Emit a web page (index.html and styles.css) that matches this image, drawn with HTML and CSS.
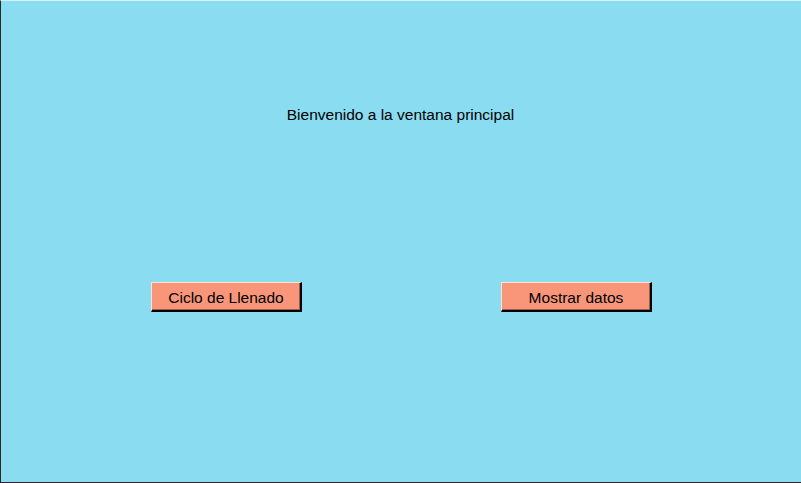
FILE: index.html
```html
<!DOCTYPE html>
<html lang="es">
<head>
<meta charset="utf-8">
<title>Ventana principal</title>
<link rel="stylesheet" href="styles.css">
</head>
<body>
<div class="window">
  <p class="welcome">Bienvenido a la ventana principal</p>
  <div class="actions">
    <button class="btn">Ciclo de Llenado</button>
    <button class="btn">Mostrar datos</button>
  </div>
</div>
</body>
</html>
```
FILE: styles.css
```css
html, body {
  margin: 0;
  padding: 0;
  background: #8adcf0;
}
.window {
  box-sizing: border-box;
  width: 801px;
  height: 483px;
  background: #8adcf0;
  border-left: 1px solid #2a2a2a;
  border-bottom: 1px solid #2a2a2a;
  border-top: 1px solid #d8f2f9;
  display: flex;
  flex-direction: column;
  font-family: "Liberation Sans", Arial, sans-serif;
  color: #000;
}
.welcome {
  margin: 105px 0 0 0;
  font-size: 15.5px;
  line-height: 18px;
  text-align: center;
  padding-right: 1px;
}
.actions {
  display: flex;
  margin-top: 158px;
  margin-left: 150px;
  gap: 199px;
}
.btn {
  box-sizing: border-box;
  width: 151px;
  height: 30px;
  padding: 2px 0 0 0;
  margin: 0;
  background: #f9967a;
  font-family: "Liberation Sans", Arial, sans-serif;
  font-size: 15.5px;
  color: #000;
  border-style: solid;
  border-width: 1px 2px 2px 1px;
  border-color: #fde2d6 #000 #000 #fde2d6;
  box-shadow: inset -1px -1px 0 #9a5c4a;
  border-radius: 0;
}
```
